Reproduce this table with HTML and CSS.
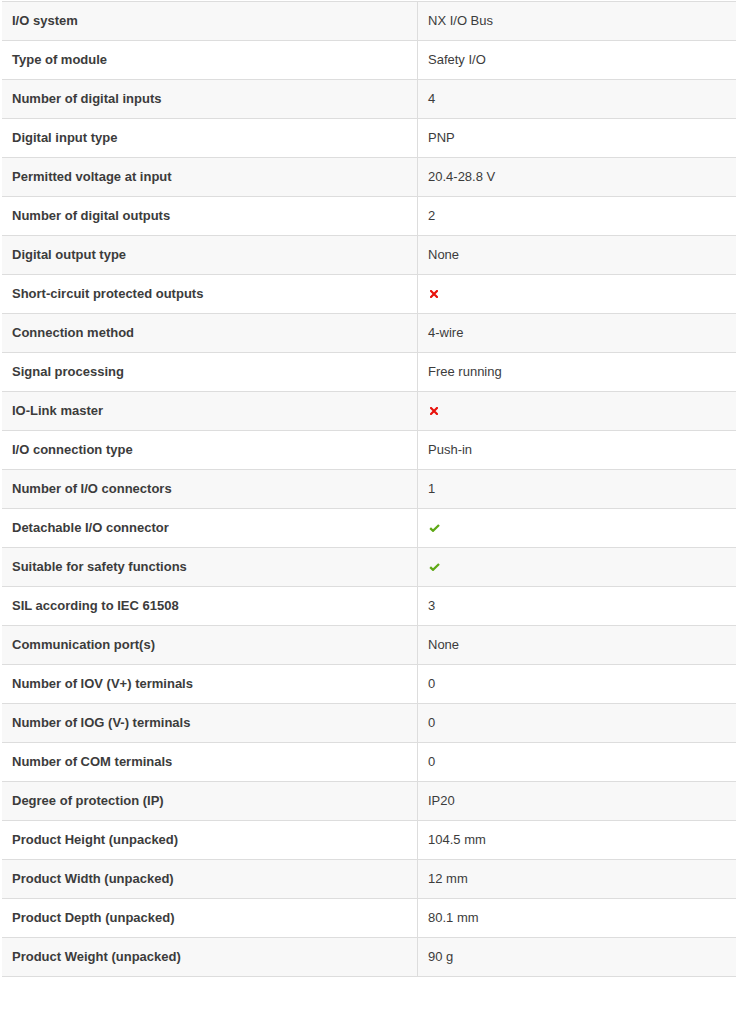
FILE: index.html
```html
<!DOCTYPE html>
<html>
<head>
<meta charset="utf-8">
<link rel="stylesheet" href="styles.css">
</head>
<body>
<table class="specs">
<tbody>
<tr><th>I/O system</th><td>NX I/O Bus</td></tr>
<tr><th>Type of module</th><td>Safety I/O</td></tr>
<tr><th>Number of digital inputs</th><td>4</td></tr>
<tr><th>Digital input type</th><td>PNP</td></tr>
<tr><th>Permitted voltage at input</th><td>20.4-28.8 V</td></tr>
<tr><th>Number of digital outputs</th><td>2</td></tr>
<tr><th>Digital output type</th><td>None</td></tr>
<tr><th>Short-circuit protected outputs</th><td><svg class="icon no" viewBox="0 0 8 8"><path d="M1 1L7 7M7 1L1 7" stroke="#e8120c" stroke-width="2.2" stroke-linecap="square"/></svg></td></tr>
<tr><th>Connection method</th><td>4-wire</td></tr>
<tr><th>Signal processing</th><td>Free running</td></tr>
<tr><th>IO-Link master</th><td><svg class="icon no" viewBox="0 0 8 8"><path d="M1 1L7 7M7 1L1 7" stroke="#e8120c" stroke-width="2.2" stroke-linecap="square"/></svg></td></tr>
<tr><th>I/O connection type</th><td>Push-in</td></tr>
<tr><th>Number of I/O connectors</th><td>1</td></tr>
<tr><th>Detachable I/O connector</th><td><svg class="icon yes" viewBox="0 0 11 8"><path d="M1.2 4.2L4 6.8L10 1" fill="none" stroke="#5ea815" stroke-width="2.3"/></svg></td></tr>
<tr><th>Suitable for safety functions</th><td><svg class="icon yes" viewBox="0 0 11 8"><path d="M1.2 4.2L4 6.8L10 1" fill="none" stroke="#5ea815" stroke-width="2.3"/></svg></td></tr>
<tr><th>SIL according to IEC 61508</th><td>3</td></tr>
<tr><th>Communication port(s)</th><td>None</td></tr>
<tr><th>Number of IOV (V+) terminals</th><td>0</td></tr>
<tr><th>Number of IOG (V-) terminals</th><td>0</td></tr>
<tr><th>Number of COM terminals</th><td>0</td></tr>
<tr><th>Degree of protection (IP)</th><td>IP20</td></tr>
<tr><th>Product Height (unpacked)</th><td>104.5 mm</td></tr>
<tr><th>Product Width (unpacked)</th><td>12 mm</td></tr>
<tr><th>Product Depth (unpacked)</th><td>80.1 mm</td></tr>
<tr><th>Product Weight (unpacked)</th><td>90 g</td></tr>
</tbody>
</table>
</body>
</html>
```
FILE: styles.css
```css
html, body {
  margin: 0;
  padding: 0;
  background: #fff;
}
body {
  font-family: "Liberation Sans", Arial, sans-serif;
  font-size: 13px;
  color: #3c3c3c;
}
.specs {
  margin: 1px 0 0 2px;
  width: 734px;
  border-collapse: collapse;
  border-spacing: 0;
}
.specs th, .specs td {
  height: 18px;
  line-height: 18px;
  padding: 10px 10px;
  text-align: left;
  vertical-align: middle;
  border-top: 1px solid #dddddd;
  border-bottom: 1px solid #dddddd;
}
.specs th {
  width: 395px;
  font-weight: bold;
  border-right: 1px solid #dddddd;
}
.specs tr:nth-child(odd) {
  background: #f8f8f8;
}
.icon {
  display: block;
  margin-left: 2px;
}
.icon.no {
  width: 8px;
  height: 8px;
}
.icon.yes {
  width: 11px;
  height: 8px;
  margin-left: 1px;
}
```
